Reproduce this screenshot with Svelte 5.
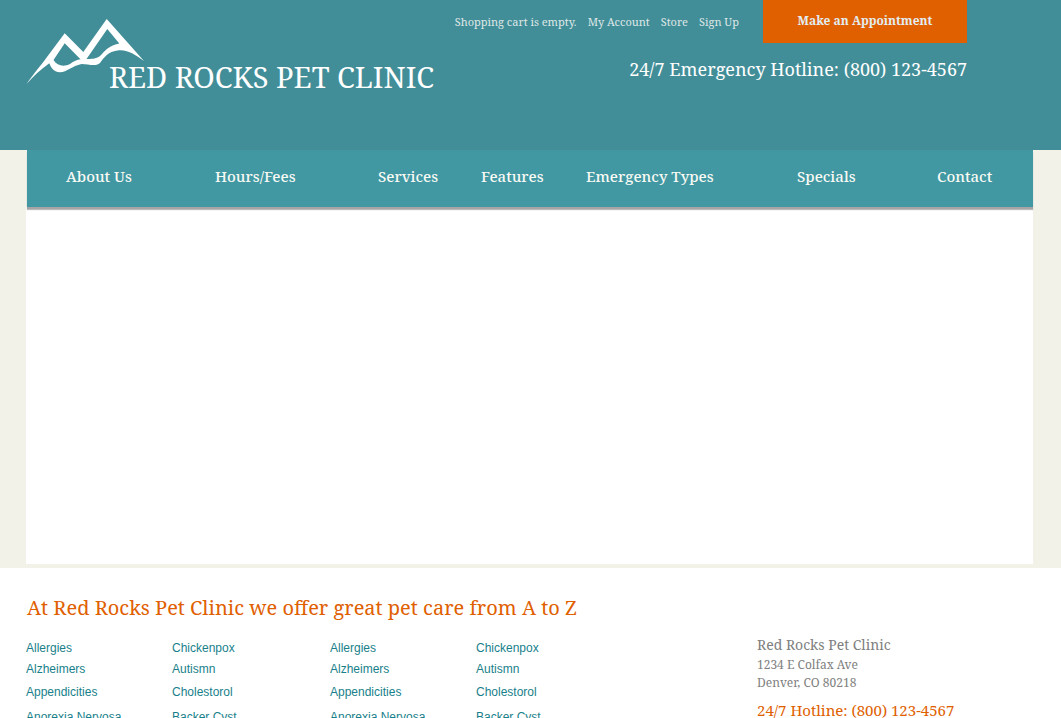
<script>
  const account = ['My Account', 'Store', 'Sign Up'];
  const sections = ['About Us', 'Hours/Fees', 'Services', 'Features', 'Emergency Types', 'Specials', 'Contact'];
  const first = ['Allergies', 'Alzheimers', 'Appendicities', 'Anorexia Nervosa'];
  const second = ['Chickenpox', 'Autismn', 'Cholestorol', 'Backer Cyst'];
  const columns = [first, second, first, second];
</script>

<div class="page">
  <header>
    <a class="logo" href="#home">
      <svg viewBox="26 18 120 68" width="120" height="68" aria-hidden="true">
        <path fill="#fff" fill-rule="evenodd" d="M26.5 84 C34 73 42 64 47 57 L64.7 33.3 L83.3 52 L106.7 19 L144 61 C136 55 128 49.5 119 50.2 C107 51.5 104 58 100 63 C95 67 89 64 81.5 64 C72 66 67 72 60 72.3 C53 72 51 67 49.3 63.3 C41 69 33 77 26.5 84 Z M64.7 43.3 L53.5 60 C57 66 64 67 70 64 C74 61 77 60 80.5 59.3 Z M107.3 29 L86.5 59 C91 59 96 59 100 56 C105 51 108 46 119.3 43.5 Z" />
      </svg>
      <span>RED ROCKS PET CLINIC</span>
    </a>
    <div class="tools">
      <div class="account">
        <span>Shopping cart is empty.</span>
        {#each account as item}<a href="#account">{item}</a>{/each}
      </div>
      <button type="button">Make an Appointment</button>
      <p class="hotline">24/7 Emergency Hotline: (800) 123-4567</p>
    </div>
  </header>

  <main>
    <nav>
      {#each sections as item}<a href="#section">{item}</a>{/each}
    </nav>
    <div class="stage"></div>
  </main>

  <footer>
    <h1>At Red Rocks Pet Clinic we offer great pet care from A to Z</h1>
    <div class="details">
      <div class="topics">
        {#each columns as column}
          <ul>
            {#each column as topic}<li><a href="#topic">{topic}</a></li>{/each}
          </ul>
        {/each}
      </div>
      <address>
        <strong>Red Rocks Pet Clinic</strong>
        <span>1234 E Colfax Ave</span>
        <span>Denver, CO 80218</span>
        <b>24/7 Hotline: (800) 123-4567</b>
      </address>
    </div>
  </footer>
</div>

<style>
  :global(body) { margin: 0; background: #fff; }
  .page {
    height: 100vh;
    overflow: hidden;
    font-family: "Droid Serif", "Noto Serif", "DejaVu Serif Condensed", "DejaVu Serif", serif;
  }
  a { color: inherit; text-decoration: none; }
  header {
    display: flex;
    justify-content: space-between;
    box-sizing: border-box;
    min-height: 150px;
    padding: 0 94px 0 26px;
    background: #428e98;
    color: #fff;
  }
  .logo { display: flex; align-items: flex-start; padding-top: 18px; white-space: nowrap; }
  .logo span { margin: 41px 0 0 -37px; font-size: 29px; line-height: 36px; }
  .tools {
    display: grid;
    grid-template-columns: auto 204px;
    grid-template-rows: 43px auto;
    column-gap: 24px;
    align-content: start;
    white-space: nowrap;
  }
  .account { display: flex; gap: 11px; padding-top: 14px; font-size: 11px; line-height: 16px; color: #dfe7e6; }
  button {
    border: 0;
    padding: 0 0 2px;
    background: #e06000;
    color: #e3edf2;
    font: bold 12px/20px "Droid Serif", "Noto Serif", "DejaVu Serif Condensed", "DejaVu Serif", serif;
  }
  .hotline { grid-column: 1 / -1; margin: 14px 0 0; font-size: 18px; line-height: 24px; text-align: right; }
  main { padding: 0 28px 4px 26px; background: #f2f2e9; }
  nav {
    position: relative;
    display: grid;
    grid-template-columns: 149fr 163fr 103fr 105fr 211fr 140fr 96fr;
    margin-left: 1px;
    padding: 15px 0 20px 39px;
    background: #4198a2;
    box-shadow: 0 2px 0 #a5a3a5, 0 3px 1px #bbb;
    clip-path: inset(0 -2px -5px -2px);
    color: #fafaf5;
    font-size: 15px;
    font-weight: 500;
    line-height: 22px;
    white-space: nowrap;
  }
  .stage { height: 357px; background: #fff; }
  footer { padding: 26px 28px 0 26px; }
  h1 { margin: 0; padding-left: 1px; color: #e06000; font-size: 20px; font-weight: 400; line-height: 28px; }
  .details { display: flex; justify-content: space-between; }
  .topics { display: grid; grid-template-columns: 146px 158px 146px 146px; }
  ul {
    margin: 0;
    padding: 16px 0 0;
    list-style: none;
    color: #187f8b;
    font: 12px/21px "Liberation Sans", Arial, sans-serif;
  }
  li + li + li { padding-top: 2px; }
  li + li + li + li { padding-top: 4px; }
  address {
    display: flex;
    flex-direction: column;
    width: 276px;
    padding-top: 13px;
    color: #808080;
    font-size: 12px;
    font-style: normal;
    line-height: 18px;
  }
  strong { margin-bottom: 1px; font-size: 14px; font-weight: 400; line-height: 20px; }
  b { margin-top: 7px; color: #e06000; font-size: 15px; font-weight: 400; line-height: 22px; }
</style>
